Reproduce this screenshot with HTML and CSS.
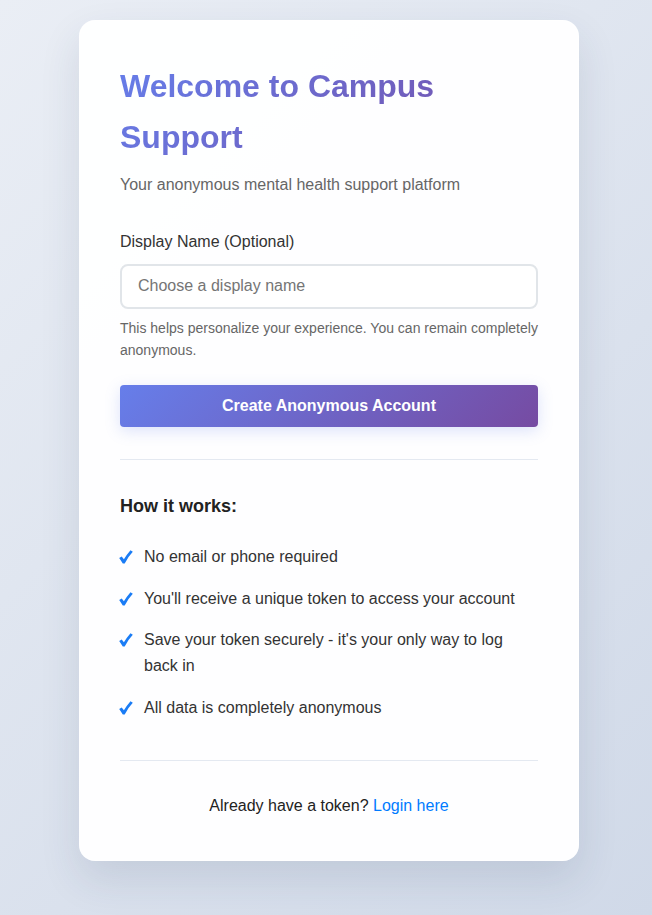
FILE: index.html
```html
<!DOCTYPE html>
<html lang="en">
<head>
<meta charset="utf-8">
<title>Campus Support</title>
<link rel="stylesheet" href="styles.css">
</head>
<body>
<main class="page">
  <section class="card">
    <h1 class="title">Welcome to Campus Support</h1>
    <p class="subtitle">Your anonymous mental health support platform</p>

    <form class="form" onsubmit="return false;">
      <div class="form-group">
        <label class="label" for="displayName">Display Name (Optional)</label>
        <input class="input" id="displayName" type="text" placeholder="Choose a display name">
        <p class="help">This helps personalize your experience. You can remain completely anonymous.</p>
      </div>
      <button class="btn" type="submit">Create Anonymous Account</button>
    </form>

    <hr class="divider">

    <div class="info">
      <h3 class="info-title">How it works:</h3>
      <ul class="list">
        <li class="item"><svg class="check" viewBox="0 0 14 14" aria-hidden="true"><path d="M0.2 7.9 L2.7 6.4 L4.9 9.3 Q8 4.3 11.5 0.3 L13.8 1.7 Q8.9 6.9 5.7 13.5 L3.8 13.5 Z"/></svg>No email or phone required</li>
        <li class="item"><svg class="check" viewBox="0 0 14 14" aria-hidden="true"><path d="M0.2 7.9 L2.7 6.4 L4.9 9.3 Q8 4.3 11.5 0.3 L13.8 1.7 Q8.9 6.9 5.7 13.5 L3.8 13.5 Z"/></svg>You'll receive a unique token to access your account</li>
        <li class="item"><svg class="check" viewBox="0 0 14 14" aria-hidden="true"><path d="M0.2 7.9 L2.7 6.4 L4.9 9.3 Q8 4.3 11.5 0.3 L13.8 1.7 Q8.9 6.9 5.7 13.5 L3.8 13.5 Z"/></svg>Save your token securely - it's your only way to log back in</li>
        <li class="item"><svg class="check" viewBox="0 0 14 14" aria-hidden="true"><path d="M0.2 7.9 L2.7 6.4 L4.9 9.3 Q8 4.3 11.5 0.3 L13.8 1.7 Q8.9 6.9 5.7 13.5 L3.8 13.5 Z"/></svg>All data is completely anonymous</li>
      </ul>
    </div>

    <hr class="divider">

    <p class="footer">Already have a token? <a class="link" href="#">Login here</a></p>
  </section>
</main>
</body>
</html>
```

FILE: styles.css
```css
* {
  box-sizing: border-box;
}

html, body {
  margin: 0;
  padding: 0;
}

body {
  min-height: 915px;
  font-family: "Liberation Sans", Arial, sans-serif;
  color: #333;
  background: linear-gradient(135deg, #eaeef5 0%, #d0d9e8 100%);
}

.page {
  padding: 20px 0 0 79px;
}

.card {
  width: 500px;
  background: rgba(255, 255, 255, 0.96);
  border: 1px solid rgba(255, 255, 255, 0.6);
  border-radius: 16px;
  padding: 40px 40px 41px;
  box-shadow: 0 18px 40px rgba(40, 55, 90, 0.12);
}

.title {
  margin: 0 0 9px;
  font-size: 32px;
  font-weight: 700;
  line-height: 1.6;
  background: linear-gradient(135deg, #667eea 0%, #764ba2 100%);
  -webkit-background-clip: text;
  background-clip: text;
  color: transparent;
}

.subtitle {
  margin: 0 0 31px;
  font-size: 16px;
  line-height: 1.6;
  color: #666;
}

.form {
  margin: 0;
}

.form-group {
  margin-bottom: 24px;
}

.label {
  display: block;
  font-size: 16px;
  line-height: 1.6;
  color: #333;
  margin-bottom: 9px;
}

.input {
  display: block;
  width: 100%;
  height: 45px;
  padding: 0 16px;
  font-family: "Liberation Sans", Arial, sans-serif;
  font-size: 16px;
  color: #333;
  background: #fff;
  border: 2px solid #e1e5e9;
  border-radius: 8px;
  outline: none;
}

.input::placeholder {
  color: #757575;
}

.help {
  margin: 8px 0 0;
  font-size: 14px;
  line-height: 1.6;
  color: #666;
}

.btn {
  display: block;
  width: 100%;
  height: 42px;
  border: none;
  border-radius: 4px;
  background: linear-gradient(135deg, #667eea 0%, #764ba2 100%);
  color: #fff;
  font-family: "Liberation Sans", Arial, sans-serif;
  font-size: 16px;
  font-weight: 700;
  cursor: pointer;
  box-shadow: 0 4px 15px rgba(102, 126, 234, 0.22);
}

.divider {
  border: none;
  border-top: 1px solid #e4e9f1;
  margin: 32px 0;
}

.info-title {
  margin: 0 0 15px;
  font-size: 18px;
  font-weight: 700;
  line-height: 1.6;
  color: #222;
}

.list {
  list-style: none;
  margin: 0;
  padding: 0;
}

.item {
  position: relative;
  padding: 8px 0 8px 24px;
  font-size: 16px;
  line-height: 1.6;
  color: #333;
}

.check {
  position: absolute;
  left: -1px;
  top: 14px;
  width: 14px;
  height: 14px;
  fill: #1a7cf5;
}

.footer {
  margin: 0;
  text-align: center;
  font-size: 16px;
  line-height: 1.6;
  color: #222;
}

.link {
  color: #007bff;
  text-decoration: none;
}
```
